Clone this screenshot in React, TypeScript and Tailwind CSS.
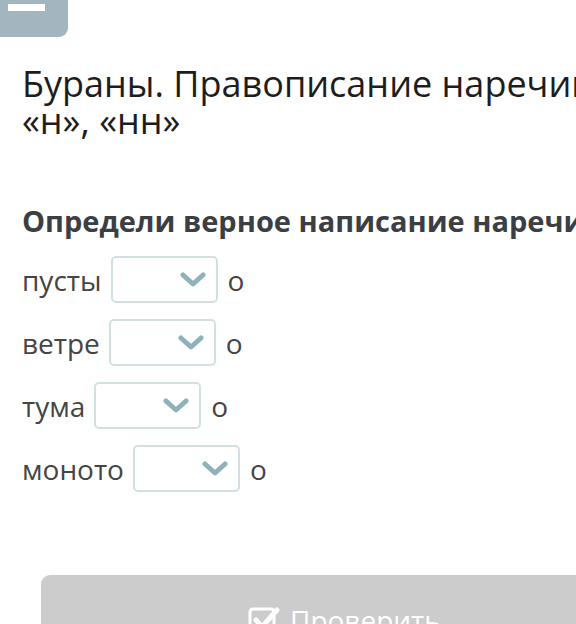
import React from "react";

function Chevron() {
  return (
    <svg width="26" height="16" viewBox="0 0 26 16" className="shrink-0">
      <path d="M3 3 L13 12 L23 3" fill="none" stroke="#8fb2ba" strokeWidth="5" strokeLinecap="round" strokeLinejoin="round" />
    </svg>
  );
}

function Row({ label, mt }: { label: string; mt: string }) {
  return (
    <div className={`flex items-center ${mt}`}>
      <span className="text-[28px] leading-none text-[#454545]">{label}</span>
      <div className="ml-[9px] flex h-[47px] w-[107px] items-center justify-end rounded-[5px] border-2 border-[#d3e0e2] bg-white pr-[10px]">
        <Chevron />
      </div>
      <span className="ml-[10px] text-[28px] leading-none text-[#454545]">о</span>
    </div>
  );
}

export default function App() {
  return (
    <div className="relative h-[624px] w-[576px] overflow-hidden bg-white" style={{ fontFamily: '"Open Sans", "Noto Sans", sans-serif' }}>
      <div className="h-[37px] w-[68px] rounded-br-[9px] bg-[#a3b6c0] pl-[8px] pt-[4px]">
        <div className="h-[7px] w-[37px] bg-white" />
      </div>
      <div className="pl-[22px]">
        <h1 className="mt-[28px] whitespace-nowrap text-[36px] font-normal leading-[37px] text-[#1d1d1d]">
          Бураны. Правописание наречий
          <br />
          «н», «нн»
        </h1>
        <div className="mt-[67px] whitespace-nowrap text-[29px] font-bold leading-[30px] text-[#3b3f43]">
          Определи верное написание наречий
        </div>
        <Row label="пусты" mt="mt-[20px]" />
        <Row label="ветре" mt="mt-[16px]" />
        <Row label="тума" mt="mt-[16px]" />
        <Row label="моното" mt="mt-[16px]" />
      </div>
      <div className="ml-[41px] mt-[83px] flex h-[80px] w-[600px] rounded-tl-[9px] bg-[#cccccc] pl-[207px] pt-[28px]">
        <div className="flex items-start gap-[10px]">
          <svg width="32" height="32" viewBox="0 0 32 32" className="mt-[2px]">
            <rect x="2" y="4" width="24" height="24" rx="3" fill="none" stroke="white" strokeWidth="3" />
            <path d="M8 15 L14 22 L29 5" fill="none" stroke="white" strokeWidth="5" strokeLinecap="round" strokeLinejoin="round" />
          </svg>
          <span className="text-[28px] leading-[34px] text-white">Проверить</span>
        </div>
      </div>
    </div>
  );
}
